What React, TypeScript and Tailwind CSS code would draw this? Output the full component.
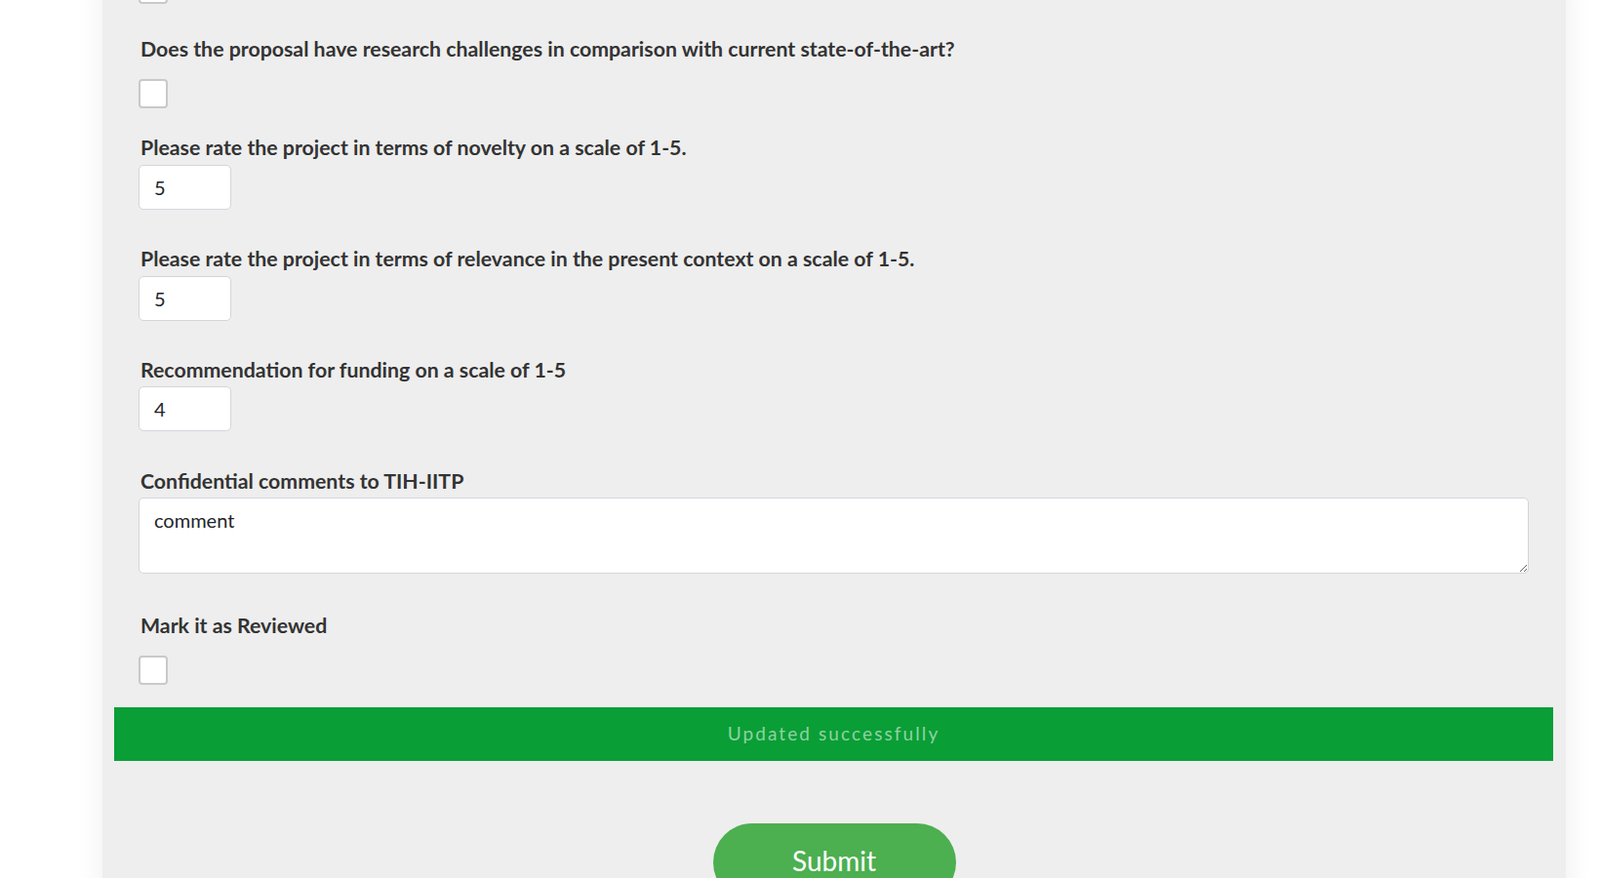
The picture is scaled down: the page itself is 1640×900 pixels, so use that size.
import React from "react";

const font = { fontFamily: "Lato, 'Noto Sans', sans-serif" };

function Label({ children, className = "" }: { children: React.ReactNode; className?: string }) {
  return (
    <label className={"block pl-[2px] text-[21.3px] leading-[30px] font-bold text-[#333333] " + className}>
      {children}
    </label>
  );
}

function Check({ className = "" }: { className?: string }) {
  return (
    <input
      type="checkbox"
      className={"block appearance-none w-[30px] h-[30px] bg-white border-2 border-[#c9c9c9] rounded-[4px] " + className}
    />
  );
}

function NumInput({ value, className = "" }: { value: string; className?: string }) {
  return (
    <input
      type="text"
      readOnly
      defaultValue={value}
      className={
        "block w-[95px] h-[46px] bg-white border border-[#d2d6dc] rounded-[5px] pl-[15px] text-[20px] text-[#212529] outline-none " +
        className
      }
    />
  );
}

export default function App() {
  return (
    <div className="w-full h-[900px] overflow-hidden bg-white" style={font}>
      <div className="ml-[105px] w-[1500px] h-[1000px] -mt-[26px] bg-[#eeeeee] shadow-[0_0_28px_rgba(0,0,0,0.07)]">
        <div className="pl-[37px] pr-[38px]">
          <Check />
          <Label className="mt-[31px]">
            Does the proposal have research challenges in comparison with current state-of-the-art?
          </Label>
          <Check className="mt-[16px]" />
          <Label className="mt-[25px]">Please rate the project in terms of novelty on a scale of 1-5.</Label>
          <NumInput value="5" className="mt-[3px]" />
          <Label className="mt-[35px]">
            Please rate the project in terms of relevance in the present context on a scale of 1-5.
          </Label>
          <NumInput value="5" className="mt-[3px]" />
          <Label className="mt-[35px]">Recommendation for funding on a scale of 1-5</Label>
          <NumInput value="4" className="mt-[2px]" />
          <Label className="mt-[36px]">Confidential comments to TIH-IITP</Label>
          <textarea
            readOnly
            defaultValue="comment"
            className="block mt-[2px] w-full h-[78px] bg-white border border-[#d2d6dc] rounded-[5px] px-[15px] py-[8px] text-[20px] leading-[28px] text-[#212529] outline-none"
          />
          <Label className="mt-[38px]">Mark it as Reviewed</Label>
          <Check className="mt-[16px]" />
        </div>
        <div className="mt-[23px] ml-[12px] mr-[13px] h-[55px] bg-[#0a9e37] flex items-center justify-center">
          <span className="text-[19px] tracking-[2.1px] text-[#8ed39f]">Updated successfully</span>
        </div>
        <div className="flex justify-center mt-[64px]">
          <button className="w-[249px] h-[80px] pb-[4px] rounded-full bg-[#4caf50] text-white text-[28px] leading-none">
            Submit
          </button>
        </div>
      </div>
    </div>
  );
}
